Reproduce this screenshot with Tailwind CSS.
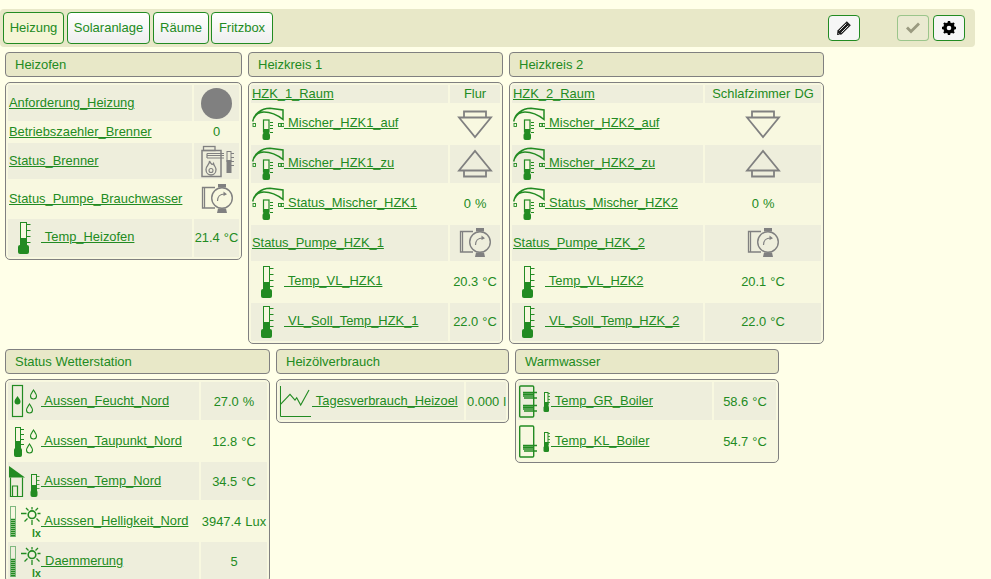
<!DOCTYPE html>
<html lang="de">
<head>
  <meta charset="UTF-8" />
  <meta name="viewport" content="width=device-width, initial-scale=1" />
  <title>Heizung</title>
  <script src="https://cdn.jsdelivr.net/npm/@tailwindcss/browser@4"></script>
</head>
<body class="bg-[#ffffe8] text-[#228b22] text-[13px] font-['Liberation_Sans',Arial,sans-serif] h-[579px] w-[991px] overflow-hidden">

  <!-- icon sprites -->
  <svg class="hidden" xmlns="http://www.w3.org/2000/svg">
    <symbol id="therm" viewBox="0 0 33 38">
      <rect x="12.500" y="3.500" width="6" height="24" fill="#f8f8e0" stroke="#228b22"/>
      <rect x="12" y="19" width="7" height="9" fill="#228b22"/>
      <rect x="10" y="26" width="11" height="9" rx="2" fill="#228b22"/>
      <path d="M19 5.500h3.500M19 11.500h3.500M19 17.500h3.500M19 23.500h3.500" stroke="#228b22"/>
    </symbol>
    <symbol id="mischer" viewBox="0 0 33 38">
      <path d="M1.700 16.500C3 9 10 3.500 19 3.300L32 5V14.500C27 10.500 20 7 13 7C8 7 4.500 9.500 2.800 13.500" fill="none" stroke="#228b22" stroke-width="1.500"/>
      <rect x="2" y="18.500" width="2.500" height="3" fill="none" stroke="#228b22" stroke-width=".9"/>
      <rect x="27.500" y="18.500" width="2.500" height="3" fill="none" stroke="#228b22" stroke-width=".9"/>
      <rect x="30.500" y="18.500" width="2.500" height="3" fill="none" stroke="#228b22" stroke-width=".9"/>
      <rect x="12.500" y="15" width="5.500" height="12" fill="#f8f8e0" stroke="#228b22" stroke-width="1.200"/>
      <rect x="12.500" y="24" width="5.500" height="7" fill="#228b22"/>
      <rect x="11.500" y="28" width="7.500" height="7" rx="2" fill="#228b22"/>
      <path d="M19 17.500h3M19 20.500h3M19 23.500h3M19 27.500h3" stroke="#228b22"/>
    </symbol>
    <symbol id="drop" viewBox="0 0 8 11" width="8" height="11">
      <path d="M4 1C2.500 3.500 1 5 1 7a3 3 0 0 0 6 0C7 5 5.500 3.500 4 1z" fill="none" stroke="#228b22" stroke-width="1.100"/>
    </symbol>
    <symbol id="humid" viewBox="0 1 33 38">
      <rect x="4.500" y="3.500" width="10" height="31" fill="none" stroke="#228b22" stroke-width="1.200"/>
      <path d="M9.500 14c-2 3-3 4-3 5.500a3 3 0 0 0 6 0c0-1.500-1-2.500-3-5.500z" fill="#228b22"/>
      <use href="#drop" x="21.500" y="7"/>
      <use href="#drop" x="17.500" y="21"/>
    </symbol>
    <symbol id="taupunkt" viewBox="0 1 33 38">
      <rect x="7.500" y="5.500" width="5" height="21" fill="none" stroke="#228b22"/>
      <rect x="7" y="19" width="6" height="9" fill="#228b22"/>
      <rect x="6" y="26" width="8" height="9" rx="2" fill="#228b22"/>
      <path d="M13 7.500h3M13 12.500h3M13 17.500h3M13 22.500h3" stroke="#228b22"/>
      <use href="#drop" x="21.500" y="7"/>
      <use href="#drop" x="17.500" y="21"/>
    </symbol>
    <symbol id="haus" viewBox="0 1 33 38">
      <path d="M1 4L17 15.500H1z" fill="#228b22"/>
      <path d="M2.500 15.500V34.500H14.500V15.500M4.500 34.500V24H9.500V34.500" fill="none" stroke="#228b22" stroke-width="1.200"/>
      <rect x="23.500" y="12.500" width="5" height="15" fill="none" stroke="#228b22"/>
      <rect x="23" y="23" width="6" height="6" fill="#228b22"/>
      <rect x="22.500" y="28" width="7" height="7" rx="2" fill="#228b22"/>
      <path d="M29 14.500h2.500M29 18.500h2.500M29 22.500h2.500M29 26.500h2.500" stroke="#228b22" stroke-width=".8"/>
    </symbol>
    <symbol id="lux" viewBox="0 1 33 38">
      <rect x="2.500" y="4.500" width="5" height="30" fill="none" stroke="#7fb87f"/>
      <path d="M3 17.500h4M3 19.500h4M3 21.500h4M3 23.500h4M3 25.500h4M3 27.500h4M3 29.500h4M3 31.500h4M3 33.500h4" stroke="#228b22" stroke-width="1.400"/>
      <circle cx="24" cy="12.700" r="3.800" fill="none" stroke="#228b22" stroke-width="1.600"/>
      <path d="M13 11.500h5.500M24 18v5M24 5v2.500M18 6l2.500 2.500M30 6l-2.500 2.500M29.500 11.500h3M28.500 16.500l3 3M19.500 16.500l-3 3" stroke="#228b22" stroke-width="1.300"/>
      <text x="24" y="34.500" font-family="Liberation Sans" font-size="10.500" font-weight="700" fill="#228b22">lx</text>
    </symbol>
    <symbol id="chart" viewBox="0 1 33 38">
      <path d="M1.500 4V34.500H32" fill="none" stroke="#228b22"/>
      <path d="M1.500 22.300L11 12.300L16 18L17.700 15.700L21.700 23L30 8" fill="none" stroke="#228b22" stroke-width="1.100"/>
    </symbol>
    <symbol id="boilerGr" viewBox="0 1 33 38">
      <rect x="1.700" y="4" width="14" height="31" rx="1" fill="none" stroke="#228b22" stroke-width="1.400"/>
      <path d="M5 10.500h14M5 12.300h11M5 14.100h11M6 16h13M5 23.500h14M5 25.300h11M5 27.100h11M6 29h13" stroke="#228b22" stroke-width="1.500" fill="none"/>
      <rect x="26.500" y="10.500" width="3.500" height="12" fill="#f8f8e0" stroke="#228b22"/>
      <rect x="26" y="20" width="4.500" height="5" fill="#228b22"/>
      <rect x="25.500" y="24" width="5.500" height="6" rx="1.500" fill="#228b22"/>
      <path d="M30 11.500h2M30 14.500h2M30 17.500h2M30 20.500h2" stroke="#228b22" stroke-width=".8"/>
    </symbol>
    <symbol id="boilerKl" viewBox="0 1 33 38">
      <rect x="1.700" y="4" width="14" height="31" rx="1" fill="none" stroke="#228b22" stroke-width="1.400"/>
      <path d="M5 23.500h14M5 25.300h11M5 27.100h11M6 29h13" stroke="#228b22" stroke-width="1.500" fill="none"/>
      <rect x="26.500" y="10.500" width="3.500" height="12" fill="#f8f8e0" stroke="#228b22"/>
      <rect x="26" y="20" width="4.500" height="5" fill="#228b22"/>
      <rect x="25.500" y="24" width="5.500" height="6" rx="1.500" fill="#228b22"/>
      <path d="M30 11.500h2M30 14.500h2M30 17.500h2M30 20.500h2" stroke="#228b22" stroke-width=".8"/>
    </symbol>
    <symbol id="pumpe" viewBox="0 0 36 36">
      <path d="M16 6.500H3.500V27H16M5.500 6.500V27" fill="none" stroke="#808080" stroke-width="1.300"/>
      <circle cx="23" cy="17" r="10.300" fill="none" stroke="#808080" stroke-width="1.400"/>
      <rect x="19" y="3" width="8" height="3.500" fill="#808080"/>
      <path d="M19 27.500H27L28 32H18z" fill="#808080"/>
      <path d="M18.500 20C18.500 16 21 13 25.500 13" fill="none" stroke="#808080" stroke-width="1.200"/>
      <path d="M24.500 10.500L28 13.200L24.500 15z" fill="#808080"/>
    </symbol>
    <symbol id="runter" viewBox="0 0 36 36">
      <path d="M7 11V5.500H29V11M2 11.500H34L18 31z" fill="none" stroke="#808080" stroke-width="1.800"/>
    </symbol>
    <symbol id="hoch" viewBox="0 0 36 36">
      <path d="M7 25V30.500H29V25M2 24.500H34L18 5z" fill="none" stroke="#808080" stroke-width="1.800"/>
    </symbol>
    <symbol id="brenner" viewBox="0 0 36 36">
      <rect x="3" y="7.500" width="19" height="26" fill="none" stroke="#808080" stroke-width="1.500"/>
      <rect x="4.500" y="3.500" width="11.500" height="4" fill="none" stroke="#808080" stroke-width="1.300"/>
      <path d="M8 10.500H25M8 12.500H25M8 15H25M8 10.500V15" stroke="#808080" stroke-width="1.200" fill="none"/>
      <path d="M10.500 18C11 21 7 22.500 7 26.500C7 30 9.500 32 12 32C14.500 32 17 30 17 26.500C17 24 15 23 14.500 20.500C13.500 22 12 21.500 10.500 18z" fill="none" stroke="#808080" stroke-width="1.300"/>
      <circle cx="12" cy="27.500" r="2" fill="none" stroke="#808080" stroke-width="1.100"/>
      <rect x="28" y="8.500" width="4" height="10" fill="#f0f0dc" stroke="#808080"/>
      <rect x="27.500" y="17" width="5" height="13" fill="#808080"/>
      <path d="M32 10.500h3M32 14.500h3M32 18.500h3M32 22.500h3" stroke="#808080"/>
    </symbol>
  </svg>

  <!-- toolbar -->
  <div class="mt-[9px] w-[975px] h-[38px] bg-[#e8e8c8] rounded-[4px] flex items-center pl-[3px] pr-[10px]">
    <a class="h-[32px] w-[61px] flex items-center justify-center rounded-[4px] border border-[#228b22] bg-[#f5f5d5]">Heizung</a>
    <a class="ml-[3px] h-[32px] w-[83px] flex items-center justify-center rounded-[4px] border border-[#228b22] bg-gradient-to-b from-white to-[#eeeeee]">Solaranlage</a>
    <a class="ml-[3px] h-[32px] w-[56px] flex items-center justify-center rounded-[4px] border border-[#228b22] bg-gradient-to-b from-white to-[#eeeeee]">Räume</a>
    <a class="ml-[2px] h-[32px] w-[62px] flex items-center justify-center rounded-[4px] border border-[#228b22] bg-gradient-to-b from-white to-[#eeeeee]">Fritzbox</a>
    <a class="ml-auto h-[26px] w-[32px] flex items-center justify-center rounded-[4px] border border-[#228b22] bg-[#f6f6f6]">
      <svg class="w-[16px] h-[16px]" viewBox="0 0 16 16"><path d="M10.800 1.200L14.800 5.200L5.500 14.500L1 15L1.500 10.500z" fill="#1a1a1a"/><path d="M3.300 10.700L10.300 3.700M5.300 12.700L12.300 5.700M2.500 13.500L3.500 14.400" stroke="#f6f6f6" stroke-width=".9"/></svg>
    </a>
    <a class="ml-[37px] h-[26px] w-[32px] flex items-center justify-center rounded-[4px] border border-[#228b22]/40 bg-[#f6f6f6]/20">
      <svg class="w-[16px] h-[16px]" viewBox="0 0 16 16"><path d="M1 8.500L6 13.500L15 4.500L13 2.500L6 9.500L3 6.500z" fill="#9a9a80"/></svg>
    </a>
    <a class="ml-[4px] h-[26px] w-[32px] flex items-center justify-center rounded-[4px] border border-[#228b22] bg-[#f6f6f6]">
      <svg class="w-[16px] h-[16px]" viewBox="0 0 16 16"><circle cx="8" cy="8" r="4.300" fill="none" stroke="#000" stroke-width="3"/><path d="M8 1V15M1 8H15M3 3L13 13M13 3L3 13" stroke="#000" stroke-width="2.400"/><circle cx="8" cy="8" r="2.300" fill="#f6f6f6"/></svg>
    </a>
  </div>

  <!-- row 1 -->
  <div class="flex items-start gap-[6px] ml-[5px] mt-[5px]">
    <section class="w-[237px]">
      <h2 class="h-[25px] pl-[9px] flex items-center bg-[#e8e8c8] border border-[#808080] rounded-[4px]">Heizofen</h2>
      <div class="mt-[5px] border border-[#808080] rounded-[5px] bg-[#f8f8e0] p-[2px] grid grid-cols-[184px_45px] gap-[2px] text-[12.9px] [word-spacing:.5px]">
        <div class="h-[36px] pl-[1px] bg-[#eeeedc] flex items-center"><a class="underline">Anforderung_Heizung</a></div>
        <div class="h-[36px] bg-[#eeeedc] flex items-center justify-center"><span class="block w-[31px] h-[31px] rounded-full bg-[#808080]"></span></div>
        <div class="h-[18px] pl-[1px] flex items-center"><a class="underline">Betriebszaehler_Brenner</a></div>
        <div class="h-[18px] flex items-center justify-center">0</div>
        <div class="h-[36px] pl-[1px] bg-[#eeeedc] flex items-center"><a class="underline">Status_Brenner</a></div>
        <div class="h-[36px] bg-[#eeeedc] flex items-center justify-center"><svg class="w-[36px] h-[36px]"><use href="#brenner"/></svg></div>
        <div class="h-[36px] pl-[1px] flex items-center"><a class="underline">Status_Pumpe_Brauchwasser</a></div>
        <div class="h-[36px] flex items-center justify-center"><svg class="w-[36px] h-[36px]"><use href="#pumpe"/></svg></div>
        <div class="h-[38px] bg-[#eeeedc] flex items-center"><a class="underline"><svg class="inline align-middle w-[33px] h-[38px]"><use href="#therm"/></svg> Temp_Heizofen</a></div>
        <div class="h-[38px] bg-[#eeeedc] flex items-center justify-center whitespace-nowrap">21.4 °C</div>
      </div>
    </section>

    <section class="w-[255px]">
      <h2 class="h-[25px] pl-[9px] flex items-center bg-[#e8e8c8] border border-[#808080] rounded-[4px]">Heizkreis 1</h2>
      <div class="mt-[5px] border border-[#808080] rounded-[5px] bg-[#f8f8e0] p-[2px] grid grid-cols-[197px_50px] gap-[2px] text-[12.9px] [word-spacing:.5px]">
        <div class="h-[18px] pl-[1px] bg-[#eeeedc] flex items-center"><a class="underline">HZK_1_Raum</a></div>
        <div class="h-[18px] bg-[#eeeedc] flex items-center justify-center">Flur</div>
        <div class="h-[38px] flex items-center"><a class="underline"><svg class="inline align-middle w-[33px] h-[38px]"><use href="#mischer"/></svg> Mischer_HZK1_auf</a></div>
        <div class="h-[38px] flex items-center justify-center"><svg class="w-[36px] h-[36px]"><use href="#runter"/></svg></div>
        <div class="h-[38px] bg-[#eeeedc] flex items-center"><a class="underline"><svg class="inline align-middle w-[33px] h-[38px]"><use href="#mischer"/></svg> Mischer_HZK1_zu</a></div>
        <div class="h-[38px] bg-[#eeeedc] flex items-center justify-center"><svg class="w-[36px] h-[36px]"><use href="#hoch"/></svg></div>
        <div class="h-[38px] flex items-center"><a class="underline"><svg class="inline align-middle w-[33px] h-[38px]"><use href="#mischer"/></svg> Status_Mischer_HZK1</a></div>
        <div class="h-[38px] flex items-center justify-center">0 %</div>
        <div class="h-[36px] pl-[1px] bg-[#eeeedc] flex items-center"><a class="underline">Status_Pumpe_HZK_1</a></div>
        <div class="h-[36px] bg-[#eeeedc] flex items-center justify-center"><svg class="w-[36px] h-[36px]"><use href="#pumpe"/></svg></div>
        <div class="h-[38px] flex items-center"><a class="underline"><svg class="inline align-middle w-[33px] h-[38px]"><use href="#therm"/></svg> Temp_VL_HZK1</a></div>
        <div class="h-[38px] flex items-center justify-center whitespace-nowrap">20.3 °C</div>
        <div class="h-[38px] bg-[#eeeedc] flex items-center"><a class="underline"><svg class="inline align-middle w-[33px] h-[38px]"><use href="#therm"/></svg> VL_Soll_Temp_HZK_1</a></div>
        <div class="h-[38px] bg-[#eeeedc] flex items-center justify-center whitespace-nowrap">22.0 °C</div>
      </div>
    </section>

    <section class="w-[315px]">
      <h2 class="h-[25px] pl-[9px] flex items-center bg-[#e8e8c8] border border-[#808080] rounded-[4px]">Heizkreis 2</h2>
      <div class="mt-[5px] border border-[#808080] rounded-[5px] bg-[#f8f8e0] p-[2px] grid grid-cols-[191px_116px] gap-[2px] text-[12.9px] [word-spacing:.5px]">
        <div class="h-[18px] pl-[1px] bg-[#eeeedc] flex items-center"><a class="underline">HZK_2_Raum</a></div>
        <div class="h-[18px] bg-[#eeeedc] flex items-center justify-center">Schlafzimmer DG</div>
        <div class="h-[38px] flex items-center"><a class="underline"><svg class="inline align-middle w-[33px] h-[38px]"><use href="#mischer"/></svg> Mischer_HZK2_auf</a></div>
        <div class="h-[38px] flex items-center justify-center"><svg class="w-[36px] h-[36px]"><use href="#runter"/></svg></div>
        <div class="h-[38px] bg-[#eeeedc] flex items-center"><a class="underline"><svg class="inline align-middle w-[33px] h-[38px]"><use href="#mischer"/></svg> Mischer_HZK2_zu</a></div>
        <div class="h-[38px] bg-[#eeeedc] flex items-center justify-center"><svg class="w-[36px] h-[36px]"><use href="#hoch"/></svg></div>
        <div class="h-[38px] flex items-center"><a class="underline"><svg class="inline align-middle w-[33px] h-[38px]"><use href="#mischer"/></svg> Status_Mischer_HZK2</a></div>
        <div class="h-[38px] flex items-center justify-center">0 %</div>
        <div class="h-[36px] pl-[1px] bg-[#eeeedc] flex items-center"><a class="underline">Status_Pumpe_HZK_2</a></div>
        <div class="h-[36px] bg-[#eeeedc] flex items-center justify-center"><svg class="w-[36px] h-[36px]"><use href="#pumpe"/></svg></div>
        <div class="h-[38px] flex items-center"><a class="underline"><svg class="inline align-middle w-[33px] h-[38px]"><use href="#therm"/></svg> Temp_VL_HZK2</a></div>
        <div class="h-[38px] flex items-center justify-center whitespace-nowrap">20.1 °C</div>
        <div class="h-[38px] bg-[#eeeedc] flex items-center"><a class="underline"><svg class="inline align-middle w-[33px] h-[38px]"><use href="#therm"/></svg> VL_Soll_Temp_HZK_2</a></div>
        <div class="h-[38px] bg-[#eeeedc] flex items-center justify-center whitespace-nowrap">22.0 °C</div>
      </div>
    </section>
  </div>

  <!-- row 2 -->
  <div class="flex items-start gap-[6px] ml-[5px] mt-[5px]">
    <section class="w-[265px]">
      <h2 class="h-[25px] pl-[9px] flex items-center bg-[#e8e8c8] border border-[#808080] rounded-[4px]">Status Wetterstation</h2>
      <div class="mt-[5px] border border-[#808080] rounded-[5px] bg-[#f8f8e0] p-[2px] grid grid-cols-[191px_66px] gap-[2px] text-[12.9px] [word-spacing:.5px]">
        <div class="h-[38px] pt-[2px] bg-[#eeeedc] flex items-center"><a class="underline"><svg class="inline align-middle w-[33px] h-[38px]"><use href="#humid"/></svg> Aussen_Feucht_Nord</a></div>
        <div class="h-[38px] pt-[2px] bg-[#eeeedc] flex items-center justify-center whitespace-nowrap">27.0 %</div>
        <div class="h-[38px] pt-[2px] flex items-center"><a class="underline"><svg class="inline align-middle w-[33px] h-[38px]"><use href="#taupunkt"/></svg> Aussen_Taupunkt_Nord</a></div>
        <div class="h-[38px] pt-[2px] flex items-center justify-center whitespace-nowrap">12.8 °C</div>
        <div class="h-[38px] pt-[2px] bg-[#eeeedc] flex items-center"><a class="underline"><svg class="inline align-middle w-[33px] h-[38px]"><use href="#haus"/></svg> Aussen_Temp_Nord</a></div>
        <div class="h-[38px] pt-[2px] bg-[#eeeedc] flex items-center justify-center whitespace-nowrap">34.5 °C</div>
        <div class="h-[38px] pt-[2px] flex items-center"><a class="underline"><svg class="inline align-middle w-[33px] h-[38px]"><use href="#lux"/></svg> Ausssen_Helligkeit_Nord</a></div>
        <div class="h-[38px] pt-[2px] flex items-center justify-center whitespace-nowrap">3947.4 Lux</div>
        <div class="h-[38px] pt-[2px] bg-[#eeeedc] flex items-center"><a class="underline"><svg class="inline align-middle w-[33px] h-[38px]"><use href="#lux"/></svg> Daemmerung</a></div>
        <div class="h-[38px] pt-[2px] bg-[#eeeedc] flex items-center justify-center">5</div>
      </div>
    </section>

    <section class="w-[233px]">
      <h2 class="h-[25px] pl-[9px] flex items-center bg-[#e8e8c8] border border-[#808080] rounded-[4px]">Heizölverbrauch</h2>
      <div class="mt-[5px] border border-[#808080] rounded-[5px] bg-[#f8f8e0] p-[2px] grid grid-cols-[185px_40px] gap-[2px] text-[12.9px] [word-spacing:.5px]">
        <div class="h-[38px] pt-[2px] bg-[#eeeedc] flex items-center"><a class="underline whitespace-nowrap"><svg class="inline align-middle w-[33px] h-[38px]"><use href="#chart"/></svg> Tagesverbrauch_Heizoel</a></div>
        <div class="h-[38px] pt-[2px] bg-[#eeeedc] flex items-center pl-[1px] whitespace-nowrap overflow-hidden">0.000 l</div>
      </div>
    </section>

    <section class="w-[264px]">
      <h2 class="h-[25px] pl-[9px] flex items-center bg-[#e8e8c8] border border-[#808080] rounded-[4px]">Warmwasser</h2>
      <div class="mt-[5px] border border-[#808080] rounded-[5px] bg-[#f8f8e0] p-[2px] grid grid-cols-[194px_62px] gap-[2px] text-[12.9px] [word-spacing:.5px]">
        <div class="h-[38px] pt-[2px] bg-[#eeeedc] flex items-center"><a class="underline"><svg class="inline align-middle w-[33px] h-[38px]"><use href="#boilerGr"/></svg> Temp_GR_Boiler</a></div>
        <div class="h-[38px] pt-[2px] bg-[#eeeedc] flex items-center justify-center whitespace-nowrap">58.6 °C</div>
        <div class="h-[38px] pt-[2px] flex items-center"><a class="underline"><svg class="inline align-middle w-[33px] h-[38px]"><use href="#boilerKl"/></svg> Temp_KL_Boiler</a></div>
        <div class="h-[38px] pt-[2px] flex items-center justify-center whitespace-nowrap">54.7 °C</div>
      </div>
    </section>
  </div>

</body>
</html>
